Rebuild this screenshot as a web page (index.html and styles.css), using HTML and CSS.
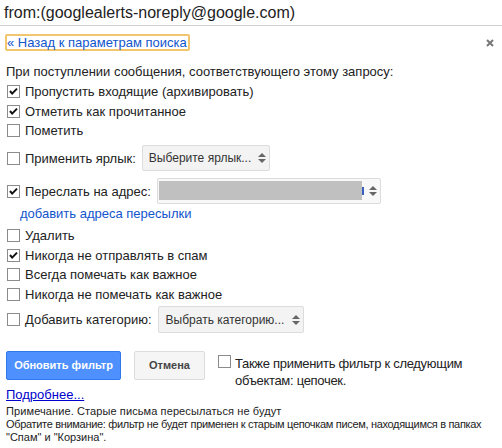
FILE: index.html
```html
<!DOCTYPE html>
<html>
<head>
<meta charset="utf-8">
<link rel="stylesheet" href="styles.css">
</head>
<body>
<div class="header">from:(googlealerts-noreply@google.com)</div>
<div class="content">
  <div class="top">
    <a class="back">« Назад к параметрам поиска</a>
    <svg class="close" width="8" height="8" viewBox="0 0 8 8"><path d="M1 1L7 7M7 1L1 7" stroke="#777" stroke-width="2"/></svg>
  </div>
  <div class="intro">При поступлении сообщения, соответствующего этому запросу:</div>
  <div class="row r1"><span class="cb"><svg width="11" height="11" viewBox="0 0 11 11"><path d="M2 5L4.2 7.6L9 2.6" fill="none" stroke="#111" stroke-width="2"/></svg></span><span>Пропустить входящие (архивировать)</span></div>
  <div class="row"><span class="cb"><svg width="11" height="11" viewBox="0 0 11 11"><path d="M2 5L4.2 7.6L9 2.6" fill="none" stroke="#111" stroke-width="2"/></svg></span><span>Отметить как прочитанное</span></div>
  <div class="row"><span class="cb"></span><span>Пометить</span></div>
  <div class="row selrow label-row"><span class="cb"></span><span>Применить ярлык:</span>
    <div class="select sel-label"><span>Выберите ярлык...</span><span class="arrows"><i class="up"></i><i class="down"></i></span></div>
  </div>
  <div class="row selrow fwd-row"><span class="cb"><svg width="11" height="11" viewBox="0 0 11 11"><path d="M2 5L4.2 7.6L9 2.6" fill="none" stroke="#111" stroke-width="2"/></svg></span><span>Переслать на адрес:</span>
    <div class="select sel-fwd"><span class="blank"></span><span class="sliver"></span><span class="arrows"><i class="up"></i><i class="down"></i></span></div>
  </div>
  <div class="addlink"><a>добавить адреса пересылки</a></div>
  <div class="row r-del"><span class="cb"></span><span>Удалить</span></div>
  <div class="row"><span class="cb"><svg width="11" height="11" viewBox="0 0 11 11"><path d="M2 5L4.2 7.6L9 2.6" fill="none" stroke="#111" stroke-width="2"/></svg></span><span>Никогда не отправлять в спам</span></div>
  <div class="row"><span class="cb"></span><span>Всегда помечать как важное</span></div>
  <div class="row"><span class="cb"></span><span>Никогда не помечать как важное</span></div>
  <div class="row selrow cat-row"><span class="cb"></span><span>Добавить категорию:</span>
    <div class="select sel-cat"><span>Выбрать категорию...</span><span class="arrows"><i class="up"></i><i class="down"></i></span></div>
  </div>
  <div class="buttons">
    <div class="btn btn-blue">Обновить фильтр</div>
    <div class="btn btn-gray">Отмена</div>
    <span class="cb cb-also"></span>
    <div class="also">Также применить фильтр к следующим<br>объектам: цепочек.</div>
  </div>
  <div class="more"><a>Подробнее...</a></div>
  <div class="notes">
    <div class="n1">Примечание. Старые письма пересылаться не будут</div>
    <div class="n2">Обратите внимание: фильтр не будет применен к старым цепочкам писем, находящимся в папках</div>
    <div class="n3">"Спам" и "Корзина".</div>
  </div>
</div>
</body>
</html>
```

FILE: styles.css
```css
html, body {
  margin: 0;
  padding: 0;
  background: #fff;
}
body {
  font-family: "Liberation Sans", Arial, sans-serif;
  color: #222;
  font-size: 13px;
  width: 502px;
  height: 448px;
  overflow: hidden;
}
.header {
  height: 25px;
  line-height: 25px;
  font-size: 16px;
  padding-left: 4px;
  border-bottom: 1px solid #cfcfcf;
  color: #222;
}
.content {
  padding: 0 8px 0 6px;
}
.top {
  margin-top: 8px;
  height: 17px;
  display: flex;
  align-items: center;
  justify-content: space-between;
}
.back {
  margin-left: -1px;
  box-sizing: border-box;
  height: 17px;
  line-height: 13px;
  border: 2px solid #f2c56f;
  border-radius: 2px;
  padding: 0 1px 0 0;
  color: #15c;
  font-size: 13px;
}
.close {
  display: block;
}
.intro {
  margin-top: 13px;
  height: 16px;
  line-height: 16px;
}
.row {
  display: flex;
  align-items: center;
  height: 19.5px;
}
.r1 { margin-top: 2px; }
.cb {
  box-sizing: border-box;
  width: 13px;
  height: 13px;
  border: 1px solid #8b8b8b;
  background: #fff;
  margin-left: 1px;
  margin-right: 5px;
  flex: none;
  display: flex;
  align-items: center;
  justify-content: center;
}
.cb svg { display: block; }
.selrow { height: auto; }
.label-row { margin-top: 4.5px; }
.fwd-row { margin-top: 7px; }
.cat-row { margin-top: 2px; }
.select {
  box-sizing: border-box;
  display: flex;
  align-items: center;
  border: 1px solid #dcdcdc;
  border-radius: 2px;
  background: #f3f3f3;
  color: #333;
  position: relative;
  margin-left: 6px;
  font-size: 12px;
  white-space: nowrap;
}
.sel-label {
  width: 128px;
  height: 26px;
  padding-left: 6px;
}
.sel-fwd {
  width: 224px;
  height: 26px;
  background: #f8f8f8;
  padding-left: 1px;
}
.sel-cat {
  width: 146px;
  height: 27px;
  padding-left: 7px;
}
.blank {
  width: 203px;
  height: 19px;
  background: #c0c0c0;
  align-self: flex-start;
  margin-top: 2px;
}
.sliver {
  width: 2px;
  height: 8px;
  background: #3b5fc0;
}
.arrows {
  position: absolute;
  right: 3px;
  top: 50%;
  transform: translateY(-50%);
  display: flex;
  flex-direction: column;
  align-items: center;
  gap: 2px;
}
.arrows i {
  display: block;
  width: 0;
  height: 0;
  border-left: 4px solid transparent;
  border-right: 4px solid transparent;
}
.arrows .up { border-bottom: 4px solid #666; }
.arrows .down { border-top: 4px solid #666; }
.addlink {
  margin-top: 1px;
  height: 18px;
  line-height: 18px;
  padding-left: 14px;
}
.addlink a { color: #15c; }
.r-del { margin-top: 3px; }
.buttons {
  margin-top: 18px;
  display: flex;
  align-items: flex-start;
}
.btn {
  box-sizing: border-box;
  height: 29px;
  line-height: 27px;
  border-radius: 2px;
  font-size: 11px;
  font-weight: bold;
  text-align: center;
}
.btn-blue {
  width: 115px;
  background: #4d90fe;
  border: 1px solid #3079ed;
  color: #fff;
  margin-right: 13px;
}
.btn-gray {
  width: 71px;
  background: #f5f5f5;
  border: 1px solid #dcdcdc;
  color: #444;
  margin-right: 12px;
}
.cb-also {
  margin-top: 4px;
  margin-right: 4px;
}
.also {
  margin-top: 3.5px;
  line-height: 17px;
  letter-spacing: -0.3px;
}
.more {
  margin-top: -1.5px;
  height: 16px;
  line-height: 16px;
}
.more a {
  color: #00c;
  text-decoration: underline;
}
.notes {
  margin-top: 2px;
  font-size: 11px;
  line-height: 13px;
  color: #222;
  white-space: nowrap;
}
.n1 { letter-spacing: 0.1px; }
.n2 { letter-spacing: -0.32px; }
```
